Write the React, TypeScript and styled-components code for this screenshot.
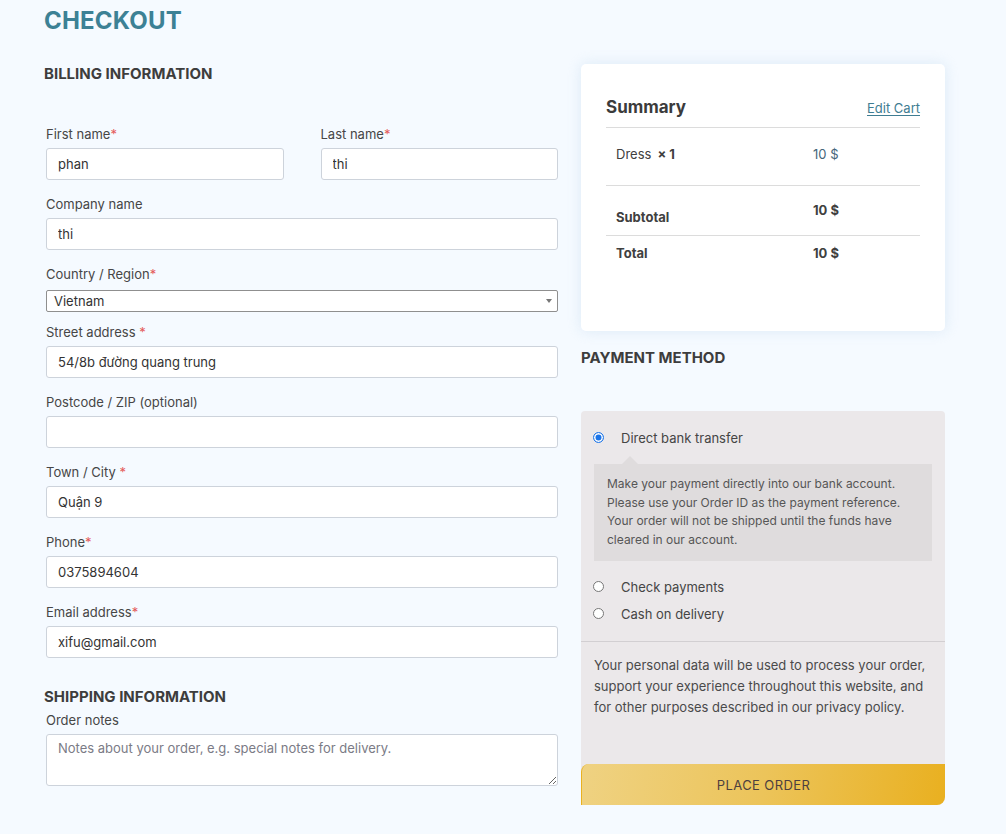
import React from "react";
import styled, { createGlobalStyle } from "styled-components";

const Global = createGlobalStyle`
  html, body { margin: 0; padding: 0; }
  body {
    background: #f5faff;
    font-family: Inter, "Liberation Sans", Arial, sans-serif;
    color: #3f3f46;
  }
  * { box-sizing: border-box; }
`;

const Page = styled.div`
  padding: 0 44px 40px 44px;
  width: 1006px;
`;

const Title = styled.h1`
  margin: 0;
  font-size: 24px;
  line-height: 41px;
  font-weight: 700;
  color: #3c8195;
  letter-spacing: 0.2px;
`;

const Columns = styled.div`
  display: grid;
  grid-template-columns: 516px 364px;
  column-gap: 21px;
  margin-top: 23px;
  align-items: start;
`;

const SectionHeading = styled.h2<{ $mt?: number; $mb?: number }>`
  margin: ${(p) => p.$mt ?? 0}px 0 ${(p) => p.$mb ?? 0}px 0;
  font-size: 15px;
  line-height: 20px;
  font-weight: 700;
  color: #3d3d3d;
`;

const Form = styled.div`
  padding: 0 2px;
`;

const TwoCol = styled.div`
  display: grid;
  grid-template-columns: 1fr 1fr;
  column-gap: 37px;
`;

const Field = styled.div<{ $mb?: number }>`
  display: flex;
  flex-direction: column;
  margin-bottom: ${(p) => p.$mb ?? 14}px;
`;

const Label = styled.label<{ $gap?: number }>`
  font-size: 13px;
  line-height: 20px;
  color: #464646;
  margin-bottom: ${(p) => p.$gap ?? 4}px;
`;

const Req = styled.span`
  color: #e45a5a;
`;

const Input = styled.input`
  height: 32px;
  border: 1px solid #cdd3db;
  border-radius: 3px;
  background: #fff;
  padding: 0 11px;
  font-family: inherit;
  font-size: 13px;
  color: #333;
  outline: none;
`;

const SelectBox = styled.div`
  height: 22px;
  border: 1px solid #8f8f8f;
  border-radius: 2px;
  background: #fff;
  padding: 0 7px;
  display: flex;
  align-items: center;
  justify-content: space-between;
  font-size: 13px;
  color: #333;
`;

const Caret = styled.span`
  width: 0;
  height: 0;
  border-left: 3.5px solid transparent;
  border-right: 3.5px solid transparent;
  border-top: 4px solid #777;
  margin-right: -2px;
`;

const TextArea = styled.textarea`
  height: 52px;
  border: 1px solid #cdd3db;
  border-radius: 3px;
  background: #fff;
  padding: 5px 11px;
  font-family: inherit;
  font-size: 13px;
  color: #333;
  resize: vertical;
  outline: none;
  &::placeholder { color: #7b7b86; }
`;

const Card = styled.div`
  background: #fff;
  border-radius: 5px;
  box-shadow: 0 0 14px rgba(190, 215, 235, 0.45);
  padding: 31px 25px 0 25px;
  height: 267px;
`;

const CardHeader = styled.div`
  display: flex;
  justify-content: space-between;
  align-items: baseline;
  padding-bottom: 8px;
  border-bottom: 1px solid #dcdcdc;
`;

const CardTitle = styled.div`
  font-size: 17px;
  line-height: 24px;
  font-weight: 700;
  color: #3b3b3b;
`;

const EditLink = styled.a`
  font-size: 13px;
  color: #3f7d92;
  text-decoration: underline;
  text-underline-offset: 2px;
`;

const SumRow = styled.div<{ $h: number; $border?: boolean }>`
  display: grid;
  grid-template-columns: 197px 1fr;
  height: ${(p) => p.$h}px;
  border-bottom: ${(p) => (p.$border ? "1px solid #dcdcdc" : "none")};
`;

const Cell = styled.div<{ $top: number; $bold?: boolean; $muted?: boolean }>`
  padding: ${(p) => p.$top}px 0 0 10px;
  font-size: 13px;
  line-height: 18px;
  font-weight: ${(p) => (p.$bold ? 700 : 400)};
  color: ${(p) => (p.$muted ? "#45667a" : "#404040")};
`;

const Qty = styled.strong`
  margin-left: 6px;
  font-weight: 700;
`;

const PayBox = styled.div`
  margin-top: 43px;
  background: #ebe8ea;
  border-radius: 4px 4px 8px 0;
  display: flex;
  flex-direction: column;
`;

const MethodList = styled.div`
  padding: 13px 13px 14px 12px;
  border-bottom: 1px solid #d2cfd2;
`;

const Method = styled.div`
  display: flex;
  align-items: center;
  height: 27px;
  font-size: 13px;
  color: #454545;
`;

const Radio = styled.span<{ $on?: boolean }>`
  width: 11px;
  height: 11px;
  border-radius: 50%;
  flex: none;
  margin-right: 17px;
  margin-top: -1px;
  background: #fff;
  border: ${(p) => (p.$on ? "1.5px solid #1b74e8" : "1px solid #777")};
  box-shadow: ${(p) => (p.$on ? "inset 0 0 0 1.5px #fff, inset 0 0 0 6px #1b74e8" : "none")};
`;

const Description = styled.div`
  position: relative;
  margin: 13px 0 12px 1px;
  background: #dfdcdd;
  padding: 11px 13px 12px 13px;
  font-size: 12px;
  line-height: 18.5px;
  color: #565656;
  &::before {
    content: "";
    position: absolute;
    top: -8px;
    left: 28px;
    border-left: 8px solid transparent;
    border-right: 8px solid transparent;
    border-bottom: 8px solid #dfdcdd;
  }
`;

const Privacy = styled.p`
  margin: 0;
  padding: 13px 13px 0 13px;
  font-size: 13px;
  line-height: 21px;
  color: #4a4a4a;
  height: 122px;
`;

const PlaceOrder = styled.button`
  height: 41px;
  width: 100%;
  border: none;
  border-left: 1px solid #e9b120;
  border-radius: 8px 0 8px 0;
  background: linear-gradient(100deg, #efd282 0%, #ecc45a 50%, #e9b020 100%);
  font-family: inherit;
  font-size: 13px;
  letter-spacing: 0.4px;
  color: #4d3f3f;
  cursor: pointer;
`;

export default function App() {
  return (
    <>
      <Global />
      <Page>
        <Title>CHECKOUT</Title>
        <Columns>
          <div>
            <SectionHeading $mb={40}>BILLING INFORMATION</SectionHeading>
            <Form>
              <TwoCol>
                <Field>
                  <Label>First name<Req>*</Req></Label>
                  <Input defaultValue="phan" />
                </Field>
                <Field>
                  <Label>Last name<Req>*</Req></Label>
                  <Input defaultValue="thi" />
                </Field>
              </TwoCol>
              <Field>
                <Label>Company name</Label>
                <Input defaultValue="thi" />
              </Field>
              <Field $mb={10}>
                <Label $gap={6}>Country / Region<Req>*</Req></Label>
                <SelectBox>
                  <span>Vietnam</span>
                  <Caret />
                </SelectBox>
              </Field>
              <Field>
                <Label>Street address <Req>*</Req></Label>
                <Input defaultValue="54/8b đường quang trung" />
              </Field>
              <Field>
                <Label>Postcode / ZIP (optional)</Label>
                <Input defaultValue="" />
              </Field>
              <Field>
                <Label>Town / City <Req>*</Req></Label>
                <Input defaultValue="Quận 9" />
              </Field>
              <Field>
                <Label>Phone<Req>*</Req></Label>
                <Input defaultValue="0375894604" />
              </Field>
              <Field $mb={0}>
                <Label>Email address<Req>*</Req></Label>
                <Input defaultValue="xifu@gmail.com" />
              </Field>
            </Form>
            <SectionHeading $mt={29} $mb={3}>SHIPPING INFORMATION</SectionHeading>
            <Form>
              <Field $mb={0}>
                <Label>Order notes</Label>
                <TextArea placeholder="Notes about your order, e.g. special notes for delivery." />
              </Field>
            </Form>
          </div>
          <div>
            <Card>
              <CardHeader>
                <CardTitle>Summary</CardTitle>
                <EditLink href="#">Edit Cart</EditLink>
              </CardHeader>
              <SumRow $h={58} $border>
                <Cell $top={17}>Dress<Qty>× 1</Qty></Cell>
                <Cell $top={17} $muted>10 $</Cell>
              </SumRow>
              <SumRow $h={50} $border>
                <Cell $top={22} $bold>Subtotal</Cell>
                <Cell $top={15} $bold>10 $</Cell>
              </SumRow>
              <SumRow $h={40}>
                <Cell $top={8} $bold>Total</Cell>
                <Cell $top={8} $bold>10 $</Cell>
              </SumRow>
            </Card>
            <SectionHeading $mt={17}>PAYMENT METHOD</SectionHeading>
            <PayBox>
              <MethodList>
                <Method><Radio $on />Direct bank transfer</Method>
                <Description>
                  Make your payment directly into our bank account. Please use your Order ID as the
                  payment reference. Your order will not be shipped until the funds have cleared in
                  our account.
                </Description>
                <Method><Radio />Check payments</Method>
                <Method><Radio />Cash on delivery</Method>
              </MethodList>
              <Privacy>
                Your personal data will be used to process your order, support your experience
                throughout this website, and for other purposes described in our privacy policy.
              </Privacy>
              <PlaceOrder>PLACE ORDER</PlaceOrder>
            </PayBox>
          </div>
        </Columns>
      </Page>
    </>
  );
}
